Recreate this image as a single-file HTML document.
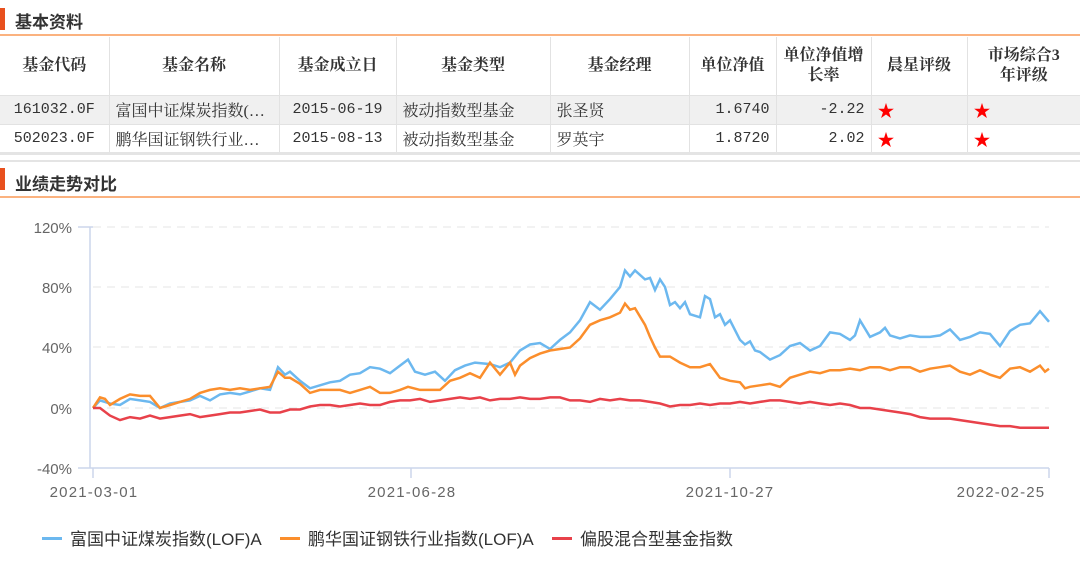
<!DOCTYPE html>
<html><head><meta charset="utf-8"><style>
*{margin:0;padding:0;box-sizing:border-box}
body{width:1080px;height:562px;background:#fff;overflow:hidden;position:relative;font-family:"Liberation Serif","Noto Serif CJK SC",serif;color:#333}
.bar{position:absolute;left:0;width:5px;background:#e8501e}
.title{position:absolute;left:15px;font-family:"Liberation Sans","Noto Sans CJK SC",sans-serif;font-weight:bold;font-size:17px;color:#333}
.oline{position:absolute;left:0;width:1080px;height:2px;background:#fbb27f}
.gline{position:absolute;left:0;width:1080px;height:2px;background:#e4e4e4}
table{position:absolute;left:0;top:37px;border-collapse:collapse;font-size:16px;table-layout:fixed;width:1080px}
td,th{border-left:1px solid #e2e2e2;border-bottom:1px solid #e2e2e2;padding:0 6px;white-space:nowrap;overflow:hidden}
th{height:58px;font-weight:bold;text-align:center;line-height:20px;font-size:16px}
td{height:29px}
tr.g td{background:#f0f0f0}
td:first-child,th:first-child{border-left:none}
.c{text-align:center}.r{text-align:right}
.m{font-family:"Liberation Mono",monospace;font-size:15px}
.star{color:#f00;font-size:17px}
.lg{position:absolute;top:525px;font-family:"Liberation Sans","Noto Sans CJK SC",sans-serif;font-size:17px;color:#333}
.lg i{display:inline-block;width:20px;height:3px;vertical-align:middle;margin-right:8px;position:relative;top:-2px}
</style></head><body>
<div class="bar" style="top:8px;height:22px"></div>
<div class="title" style="top:8px">基本资料</div>
<div class="oline" style="top:34px"></div>
<table>
<colgroup><col style="width:109px"><col style="width:170px"><col style="width:117px"><col style="width:154px"><col style="width:139px"><col style="width:87px"><col style="width:95px"><col style="width:96px"><col style="width:113px"></colgroup>
<tr><th>基金代码</th><th>基金名称</th><th>基金成立日</th><th>基金类型</th><th>基金经理</th><th>单位净值</th><th>单位净值增<br>长率</th><th>晨星评级</th><th>市场综合3<br>年评级</th></tr>
<tr class="g"><td class="c m">161032.0F</td><td>富国中证煤炭指数(…</td><td class="c m">2015-06-19</td><td>被动指数型基金</td><td>张圣贤</td><td class="r m">1.6740</td><td class="r m">-2.22</td><td><span class="star">★</span></td><td><span class="star">★</span></td></tr>
<tr><td class="c m">502023.0F</td><td>鹏华国证钢铁行业…</td><td class="c m">2015-08-13</td><td>被动指数型基金</td><td>罗英宇</td><td class="r m">1.8720</td><td class="r m">2.02</td><td><span class="star">★</span></td><td><span class="star">★</span></td></tr>
</table>
<div class="gline" style="top:152px;height:3px"></div>
<div class="gline" style="top:160px"></div>
<div class="bar" style="top:168px;height:22px"></div>
<div class="title" style="top:170px">业绩走势对比</div>
<div class="oline" style="top:196px"></div>
<svg id="ch" width="1080" height="562" style="position:absolute;left:0;top:0" font-family="Liberation Sans, sans-serif" font-size="15" fill="#666">
<g stroke="#e6e6e6" stroke-dasharray="8,6" stroke-width="1">
<line x1="93" y1="227" x2="1049" y2="227"/><line x1="93" y1="287" x2="1049" y2="287"/><line x1="93" y1="347" x2="1049" y2="347"/><line x1="93" y1="408" x2="1049" y2="408"/>
</g>
<g stroke="#ccd6eb" stroke-width="1.5">
<line x1="78" y1="227" x2="93" y2="227"/><line x1="90" y1="227" x2="90" y2="468"/><line x1="78" y1="468" x2="1049" y2="468"/>
<line x1="93" y1="468" x2="93" y2="478"/><line x1="411" y1="468" x2="411" y2="478"/><line x1="730" y1="468" x2="730" y2="478"/><line x1="1049" y1="468" x2="1049" y2="478"/>
</g>
<g text-anchor="end"><text x="72" y="233">120%</text><text x="72" y="293">80%</text><text x="72" y="353">40%</text><text x="72" y="414">0%</text><text x="72" y="474">-40%</text></g>
<g text-anchor="middle" letter-spacing="1.2"><text x="94" y="497">2021-03-01</text><text x="412" y="497">2021-06-28</text><text x="730" y="497">2021-10-27</text><text x="1001" y="497">2022-02-25</text></g>
<polyline id="pb" fill="none" stroke="#6cb8ef" stroke-width="2.5"/>
<polyline id="po" fill="none" stroke="#fb8e2c" stroke-width="2.5"/>
<polyline id="pr" fill="none" stroke="#e8414a" stroke-width="2.5"/>
</svg>
<div class="lg" style="left:42px"><i style="background:#6cb8ef"></i>富国中证煤炭指数(LOF)A</div>
<div class="lg" style="left:280px"><i style="background:#fb8e2c"></i>鹏华国证钢铁行业指数(LOF)A</div>
<div class="lg" style="left:552px"><i style="background:#e8414a"></i>偏股混合型基金指数</div>
<script>
function P(id,a){var s=[];for(var i=0;i<a.length;i+=2){s.push(a[i]+','+(408-a[i+1]*1.5125).toFixed(1));}document.getElementById(id).setAttribute('points',s.join(' '));}
P('pb',[93,0,100,5,110,3,120,2,130,6,140,5,150,4,160,0,170,3,180,4,190,5,200,8,210,5,220,9,230,10,240,9,250,11,260,13,270,12,278,27,285,22,290,24,300,18,310,13,320,15,330,17,340,18,350,22,360,23,370,27,380,26,390,23,400,28,408,32,415,24,425,22,435,24,445,18,455,25,465,28,475,30,490,29,500,27,510,30,520,38,530,42,540,43,550,39,560,45,570,50,580,58,590,70,600,65,610,72,620,80,625,91,630,87,635,91,645,85,650,86,655,78,660,85,665,80,670,68,675,70,680,66,685,70,690,62,700,60,705,74,710,72,715,60,720,62,725,55,730,58,740,45,745,42,750,44,755,38,760,37,770,32,780,35,790,41,800,43,810,38,820,41,830,50,840,49,850,45,855,48,860,58,870,47,880,50,885,53,890,48,900,46,910,48,920,47,930,47,940,48,950,52,960,45,970,47,980,50,990,49,1000,41,1010,51,1020,55,1030,56,1040,64,1049,57]);
P('po',[93,0,100,7,105,6,110,2,120,6,130,9,140,8,150,8,160,0,170,2,180,4,190,6,200,10,210,12,220,13,230,12,240,13,250,12,260,13,270,14,278,24,285,20,290,20,300,16,310,10,320,12,330,12,340,12,350,10,360,12,370,14,380,10,390,10,400,12,408,14,420,12,430,12,440,12,450,18,460,20,470,23,480,20,490,30,500,22,510,30,515,22,520,28,530,33,540,36,550,38,560,39,570,40,580,46,590,55,600,58,610,60,620,63,625,69,630,65,635,66,645,55,650,47,655,40,660,34,670,34,680,30,690,27,700,27,710,29,720,20,730,18,740,17,745,13,750,14,760,15,770,16,780,14,790,20,800,22,810,24,820,23,830,25,840,25,850,26,860,25,870,27,880,27,890,25,900,27,910,27,920,24,930,26,940,27,950,28,960,24,970,22,980,25,990,22,1000,20,1010,26,1020,27,1030,24,1040,28,1045,24,1049,26]);
P('pr',[93,0,100,0,110,-5,120,-8,130,-6,140,-7,150,-5,160,-7,170,-6,180,-5,190,-4,200,-6,210,-5,220,-4,230,-3,240,-3,250,-2,260,-1,270,-3,280,-3,290,-1,300,-1,310,1,320,2,330,2,340,1,350,2,360,3,370,2,380,2,390,4,400,5,410,5,420,6,430,4,440,5,450,6,460,7,470,6,480,7,490,5,500,6,510,6,520,7,530,6,540,6,550,7,560,7,570,5,580,5,590,4,600,6,610,5,620,6,630,5,640,5,650,4,660,3,670,1,680,2,690,2,700,3,710,2,720,3,730,3,740,4,750,3,760,4,770,5,780,5,790,4,800,3,810,4,820,3,830,2,840,3,850,2,860,0,870,0,880,-1,890,-2,900,-3,910,-4,920,-6,930,-7,940,-7,950,-7,960,-8,970,-9,980,-10,990,-11,1000,-12,1010,-12,1020,-13,1030,-13,1040,-13,1049,-13]);
</script>
</body></html>
